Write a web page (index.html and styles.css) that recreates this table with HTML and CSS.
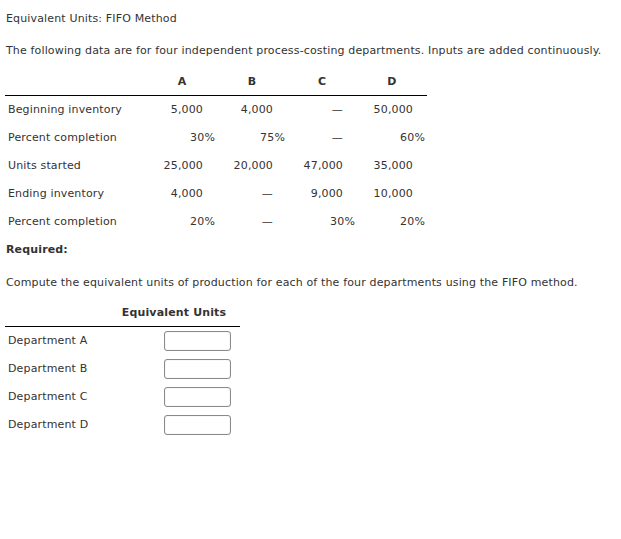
FILE: index.html
```html
<!DOCTYPE html>
<html>
<head>
<meta charset="utf-8">
<link rel="stylesheet" href="styles.css">
</head>
<body>
<div class="page">
  <p class="title">Equivalent Units: FIFO Method</p>
  <p class="intro">The following data are for four independent process-costing departments. Inputs are added continuously.</p>
  <table class="data">
    <thead>
      <tr><th class="lbl"></th><th>A</th><th>B</th><th>C</th><th>D</th></tr>
    </thead>
    <tbody>
      <tr><td class="lbl">Beginning inventory</td><td class="num">5,000</td><td class="num">4,000</td><td class="num">—</td><td class="num">50,000</td></tr>
      <tr><td class="lbl">Percent completion</td><td class="pct">30%</td><td class="pct">75%</td><td class="num">—</td><td class="pct">60%</td></tr>
      <tr><td class="lbl">Units started</td><td class="num">25,000</td><td class="num">20,000</td><td class="num">47,000</td><td class="num">35,000</td></tr>
      <tr><td class="lbl">Ending inventory</td><td class="num">4,000</td><td class="num">—</td><td class="num">9,000</td><td class="num">10,000</td></tr>
      <tr><td class="lbl">Percent completion</td><td class="pct">20%</td><td class="num">—</td><td class="pct">30%</td><td class="pct">20%</td></tr>
    </tbody>
  </table>
  <p class="required">Required:</p>
  <p class="task">Compute the equivalent units of production for each of the four departments using the FIFO method.</p>
  <table class="answer">
    <thead>
      <tr><th class="lbl"></th><th class="eq">Equivalent Units</th></tr>
    </thead>
    <tbody>
      <tr><td class="lbl">Department A</td><td class="inp"><input type="text"></td></tr>
      <tr><td class="lbl">Department B</td><td class="inp"><input type="text"></td></tr>
      <tr><td class="lbl">Department C</td><td class="inp"><input type="text"></td></tr>
      <tr><td class="lbl">Department D</td><td class="inp"><input type="text"></td></tr>
    </tbody>
  </table>
</div>
</body>
</html>
```
FILE: styles.css
```css
html, body {
  margin: 0;
  padding: 0;
  background: #fff;
}
body {
  font-family: "DejaVu Sans", Verdana, sans-serif;
  font-size: 11px;
  line-height: 14px;
  color: #333;
  letter-spacing: 0.15px;
}
.page {
  padding: 12px 5px 0 5px;
}
p {
  margin: 0;
}
.title {
  padding-left: 1px;
}
.intro {
  margin-top: 18px;
  padding-left: 1px;
}
table {
  border-collapse: collapse;
  border-spacing: 0;
}
th, td {
  padding: 0;
}
.data {
  margin-top: 10px;
}
.data th {
  height: 27px;
  width: 70px;
  text-align: center;
  font-weight: bold;
  border-bottom: 1px solid #000;
  color: #333;
}
.data th.lbl {
  width: 142px;
}
.data td {
  height: 28px;
  line-height: 28px;
}
td.lbl {
  text-align: left;
  padding-left: 3px;
}
td.num {
  text-align: right;
  padding-right: 14px;
}
td.pct {
  text-align: right;
  padding-right: 2px;
}
.required {
  margin-top: 7px;
  font-weight: bold;
  padding-left: 1px;
}
.task {
  margin-top: 19px;
  padding-left: 1px;
}
.answer {
  margin-top: 9px;
}
.answer th {
  height: 27px;
  border-bottom: 1px solid #000;
  font-weight: bold;
  text-align: center;
}
.answer th.lbl {
  width: 103px;
}
.answer th.eq {
  width: 132px;
}
.answer td {
  height: 28px;
  line-height: 28px;
}
td.inp {
  text-align: right;
  padding-right: 9px;
}
.inp input {
  box-sizing: border-box;
  width: 67px;
  height: 20px;
  margin: 0;
  border: 1px solid #8a8a8a;
  border-radius: 3px;
  box-shadow: inset 0 0 1px #bbb;
  vertical-align: middle;
  padding: 0;
  display: inline-block;
}
```
